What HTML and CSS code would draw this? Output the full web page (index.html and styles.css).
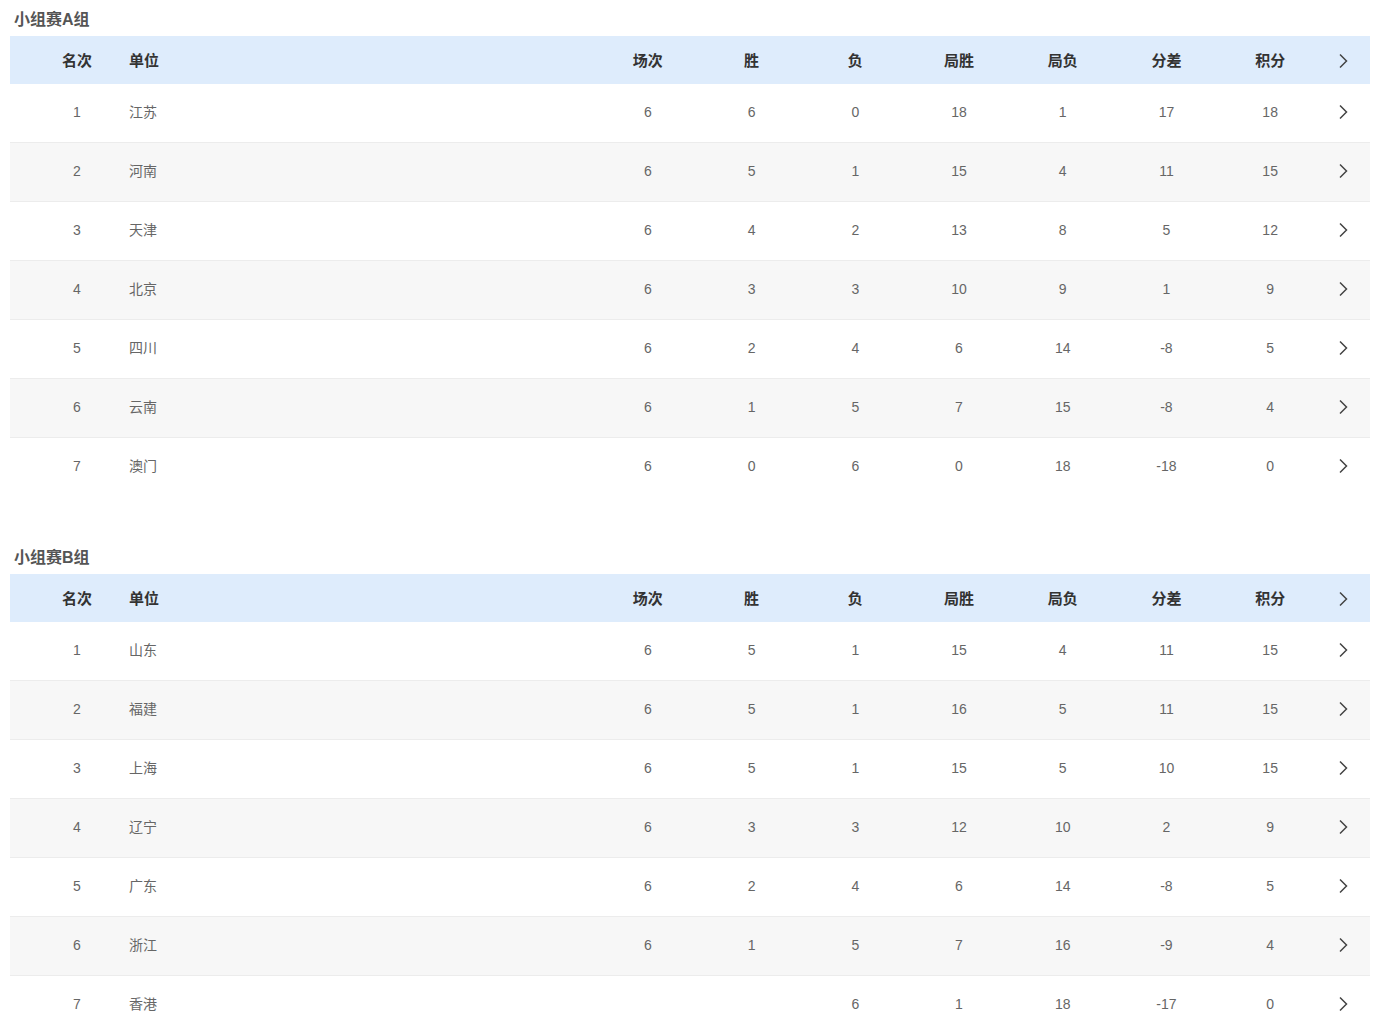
FILE: index.html
```html
<!DOCTYPE html>
<html lang="zh-CN">
<head>
<meta charset="utf-8">
<title>小组赛积分榜</title>
<link rel="stylesheet" href="styles.css">
</head>
<body>
<div class="page">
  <section class="group">
    <h2 class="group-title">小组赛A组</h2>
    <div class="table">
      <div class="row head">
        <div class="c rank">名次</div><div class="c name">单位</div>
        <div class="c">场次</div><div class="c">胜</div><div class="c">负</div><div class="c">局胜</div><div class="c">局负</div><div class="c">分差</div><div class="c">积分</div>
        <div class="c arrow"><svg viewBox="0 0 10 16" width="10" height="16"><path d="M2 1.5 L8.5 8 L2 14.5" /></svg></div>
      </div>
      <div class="row"><div class="c rank">1</div><div class="c name">江苏</div><div class="c">6</div><div class="c">6</div><div class="c">0</div><div class="c">18</div><div class="c">1</div><div class="c">17</div><div class="c">18</div><div class="c arrow"><svg viewBox="0 0 10 16" width="10" height="16"><path d="M2 1.5 L8.5 8 L2 14.5" /></svg></div></div>
      <div class="row"><div class="c rank">2</div><div class="c name">河南</div><div class="c">6</div><div class="c">5</div><div class="c">1</div><div class="c">15</div><div class="c">4</div><div class="c">11</div><div class="c">15</div><div class="c arrow"><svg viewBox="0 0 10 16" width="10" height="16"><path d="M2 1.5 L8.5 8 L2 14.5" /></svg></div></div>
      <div class="row"><div class="c rank">3</div><div class="c name">天津</div><div class="c">6</div><div class="c">4</div><div class="c">2</div><div class="c">13</div><div class="c">8</div><div class="c">5</div><div class="c">12</div><div class="c arrow"><svg viewBox="0 0 10 16" width="10" height="16"><path d="M2 1.5 L8.5 8 L2 14.5" /></svg></div></div>
      <div class="row"><div class="c rank">4</div><div class="c name">北京</div><div class="c">6</div><div class="c">3</div><div class="c">3</div><div class="c">10</div><div class="c">9</div><div class="c">1</div><div class="c">9</div><div class="c arrow"><svg viewBox="0 0 10 16" width="10" height="16"><path d="M2 1.5 L8.5 8 L2 14.5" /></svg></div></div>
      <div class="row"><div class="c rank">5</div><div class="c name">四川</div><div class="c">6</div><div class="c">2</div><div class="c">4</div><div class="c">6</div><div class="c">14</div><div class="c">-8</div><div class="c">5</div><div class="c arrow"><svg viewBox="0 0 10 16" width="10" height="16"><path d="M2 1.5 L8.5 8 L2 14.5" /></svg></div></div>
      <div class="row"><div class="c rank">6</div><div class="c name">云南</div><div class="c">6</div><div class="c">1</div><div class="c">5</div><div class="c">7</div><div class="c">15</div><div class="c">-8</div><div class="c">4</div><div class="c arrow"><svg viewBox="0 0 10 16" width="10" height="16"><path d="M2 1.5 L8.5 8 L2 14.5" /></svg></div></div>
      <div class="row"><div class="c rank">7</div><div class="c name">澳门</div><div class="c">6</div><div class="c">0</div><div class="c">6</div><div class="c">0</div><div class="c">18</div><div class="c">-18</div><div class="c">0</div><div class="c arrow"><svg viewBox="0 0 10 16" width="10" height="16"><path d="M2 1.5 L8.5 8 L2 14.5" /></svg></div></div>
    </div>
  </section>

  <section class="group">
    <h2 class="group-title">小组赛B组</h2>
    <div class="table">
      <div class="row head">
        <div class="c rank">名次</div><div class="c name">单位</div>
        <div class="c">场次</div><div class="c">胜</div><div class="c">负</div><div class="c">局胜</div><div class="c">局负</div><div class="c">分差</div><div class="c">积分</div>
        <div class="c arrow"><svg viewBox="0 0 10 16" width="10" height="16"><path d="M2 1.5 L8.5 8 L2 14.5" /></svg></div>
      </div>
      <div class="row"><div class="c rank">1</div><div class="c name">山东</div><div class="c">6</div><div class="c">5</div><div class="c">1</div><div class="c">15</div><div class="c">4</div><div class="c">11</div><div class="c">15</div><div class="c arrow"><svg viewBox="0 0 10 16" width="10" height="16"><path d="M2 1.5 L8.5 8 L2 14.5" /></svg></div></div>
      <div class="row"><div class="c rank">2</div><div class="c name">福建</div><div class="c">6</div><div class="c">5</div><div class="c">1</div><div class="c">16</div><div class="c">5</div><div class="c">11</div><div class="c">15</div><div class="c arrow"><svg viewBox="0 0 10 16" width="10" height="16"><path d="M2 1.5 L8.5 8 L2 14.5" /></svg></div></div>
      <div class="row"><div class="c rank">3</div><div class="c name">上海</div><div class="c">6</div><div class="c">5</div><div class="c">1</div><div class="c">15</div><div class="c">5</div><div class="c">10</div><div class="c">15</div><div class="c arrow"><svg viewBox="0 0 10 16" width="10" height="16"><path d="M2 1.5 L8.5 8 L2 14.5" /></svg></div></div>
      <div class="row"><div class="c rank">4</div><div class="c name">辽宁</div><div class="c">6</div><div class="c">3</div><div class="c">3</div><div class="c">12</div><div class="c">10</div><div class="c">2</div><div class="c">9</div><div class="c arrow"><svg viewBox="0 0 10 16" width="10" height="16"><path d="M2 1.5 L8.5 8 L2 14.5" /></svg></div></div>
      <div class="row"><div class="c rank">5</div><div class="c name">广东</div><div class="c">6</div><div class="c">2</div><div class="c">4</div><div class="c">6</div><div class="c">14</div><div class="c">-8</div><div class="c">5</div><div class="c arrow"><svg viewBox="0 0 10 16" width="10" height="16"><path d="M2 1.5 L8.5 8 L2 14.5" /></svg></div></div>
      <div class="row"><div class="c rank">6</div><div class="c name">浙江</div><div class="c">6</div><div class="c">1</div><div class="c">5</div><div class="c">7</div><div class="c">16</div><div class="c">-9</div><div class="c">4</div><div class="c arrow"><svg viewBox="0 0 10 16" width="10" height="16"><path d="M2 1.5 L8.5 8 L2 14.5" /></svg></div></div>
      <div class="row"><div class="c rank">7</div><div class="c name">香港</div><div class="c"></div><div class="c"></div><div class="c">6</div><div class="c">1</div><div class="c">18</div><div class="c">-17</div><div class="c">0</div><div class="c arrow"><svg viewBox="0 0 10 16" width="10" height="16"><path d="M2 1.5 L8.5 8 L2 14.5" /></svg></div></div>
    </div>
  </section>
</div>
</body>
</html>
```

FILE: styles.css
```css
html, body {
  margin: 0;
  padding: 0;
  background: #ffffff;
}

body {
  font-family: "Liberation Sans", "Noto Sans CJK SC", Arial, sans-serif;
}

.page {
  padding: 0 14px 0 10px;
}

.group + .group {
  margin-top: 41px;
}

.group-title {
  margin: 0;
  height: 36px;
  line-height: 40px;
  padding-left: 4px;
  font-size: 16px;
  font-weight: bold;
  color: #555555;
  box-sizing: border-box;
}

.table {
  width: 1360px;
}

.row {
  display: grid;
  grid-template-columns: 119px 467px repeat(7, 1fr) 48px;
  align-items: center;
  height: 59px;
  padding-bottom: 2px;
  border-bottom: 1px solid #ececec;
  box-sizing: border-box;
  font-size: 14px;
  line-height: 20px;
  color: #666666;
}

.row:nth-child(odd) {
  background: #f7f7f7;
}

.row:last-child {
  border-bottom-color: transparent;
}

.row.head {
  height: 48px;
  padding-bottom: 0;
  padding-top: 2px;
  background: #deecfc;
  border-bottom: none;
  font-size: 15px;
  font-weight: bold;
  color: #333333;
}

.c {
  text-align: center;
  white-space: nowrap;
}

.c.rank {
  padding-left: 15px;
}

.c.name {
  text-align: left;
}

.c.arrow {
  display: flex;
  align-items: center;
  justify-content: center;
  padding-right: 6px;
  height: 16px;
}

.c.arrow svg {
  display: block;
}

.c.arrow path {
  fill: none;
  stroke: #444444;
  stroke-width: 1.5;
  stroke-linejoin: miter;
}
```
